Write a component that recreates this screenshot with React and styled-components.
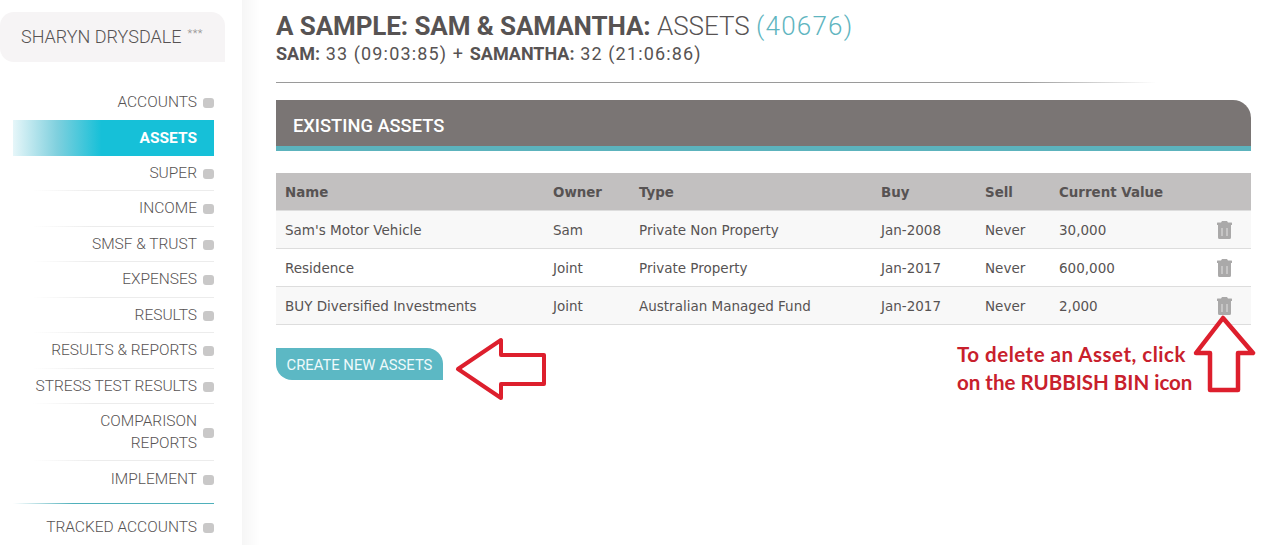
import React from 'react';
import styled, { createGlobalStyle } from 'styled-components';

const GlobalStyle = createGlobalStyle`
  html, body { margin: 0; padding: 0; background: #fff; }
  body { font-family: Roboto, "Liberation Sans", sans-serif; overflow: hidden; }
`;

const Page = styled.div`
  position: relative;
  display: flex;
  width: 1271px;
  height: 545px;
  overflow: hidden;
`;

const Sidebar = styled.aside`
  width: 242px;
  flex: none;
  padding-top: 12px;
  box-sizing: border-box;
`;

const UserBox = styled.div`
  width: 225px;
  height: 50px;
  box-sizing: border-box;
  padding: 0 0 2px 21px;
  display: flex;
  align-items: center;
  background: #f6f4f5;
  border-radius: 14px 14px 0 14px;
  font-size: 18px;
  font-weight: 300;
  color: #575353;
  white-space: nowrap;
`;

const Stars = styled.span`
  font-size: 11px;
  color: #8f8b8b;
  margin-left: 6px;
  margin-top: -5px;
  letter-spacing: 0.5px;
`;

const Nav = styled.nav`
  margin: 22px 28px 0 13px;
  display: flex;
  flex-direction: column;
`;

const NavItem = styled.div`
  display: flex;
  align-items: center;
  justify-content: flex-end;
  min-height: 35.5px;
  padding: 6px 0;
  box-sizing: border-box;
  text-align: right;
  font-size: 15.5px;
  font-weight: 300;
  line-height: 22px;
  color: #575353;
  border-bottom: ${p => (p.$line ? '1px solid #f0f0f0' : '0')};
  border-image: ${p => (p.$line ? 'linear-gradient(to right, #ffffff 10%, #ececec 40%, #ececec 100%) 1' : 'none')};
`;

const ActiveItem = styled(NavItem)`
  height: 36px;
  padding-right: 17px;
  background: linear-gradient(to right, #e6f6f9 0%, #7fd0de 22%, #16c0d8 44%, #16c0d8 100%);
  color: #fff;
  font-weight: 700;
`;

const Bullet = styled.span`
  flex: none;
  width: 11px;
  height: 10px;
  margin: 2px 0 0 6px;
  border-radius: 3px;
  background: #c9c8c8;
`;

const NavRule = styled.div`
  height: 1px;
  margin: 6px 0;
  background: linear-gradient(to right, #ffffff 0%, #4fb0bb 30%, #4fb0bb 100%);
`;

const Gutter = styled.div`
  width: 18px;
  flex: none;
  background: linear-gradient(to right, #f6f6f6, #ffffff);
`;

const Main = styled.main`
  width: 975px;
  margin-left: 16px;
  flex: none;
`;

const Title = styled.h1`
  margin: 11px 0 0;
  font-size: 26px;
  line-height: 30px;
  font-weight: 300;
  color: #575353;
  white-space: nowrap;

  strong { font-weight: 700; letter-spacing: -0.1px; }
`;

const Count = styled.span`
  color: #5fb5c0;
  letter-spacing: 1.2px;
`;

const SubTitle = styled.div`
  margin-top: 1px;
  font-size: 18px;
  line-height: 24px;
  font-weight: 400;
  letter-spacing: 1.15px;
  color: #575353;
  white-space: nowrap;

  strong { font-weight: 700; letter-spacing: 0; }
`;

const Rule = styled.div`
  height: 1px;
  margin-top: 16px;
  width: 880px;
  background: linear-gradient(to right, #9a9a9a 0%, #9a9a9a 85%, #ffffff 100%);
`;

const PanelHead = styled.div`
  margin-top: 17px;
  height: 41px;
  padding: 5px 0 0 17px;
  display: flex;
  align-items: center;
  background: #7a7574;
  border-bottom: 5px solid #5cb3bd;
  border-top-right-radius: 18px;
  color: #fff;
  font-size: 18.3px;
  font-weight: 500;
`;

const Table = styled.table`
  width: 975px;
  margin-top: 22px;
  border-collapse: collapse;
  table-layout: fixed;
  font-family: "DejaVu Sans", "Noto Sans", sans-serif;
  font-size: 13.5px;
  color: #575353;
`;

const Th = styled.th`
  height: 36px;
  padding: 1px 0 0 9px;
  background: #c2c0c0;
  text-align: left;
  font-weight: 700;
  font-size: 13.4px;
`;

const Row = styled.tr`
  background: ${p => (p.$odd ? '#f8f8f8' : '#ffffff')};
  border-top: 1px solid #dddddd;
  border-bottom: 1px solid #dddddd;
`;

const Td = styled.td`
  height: 37px;
  padding: 0 0 0 9px;
`;

const BinCell = styled(Td)`
  padding: 0 0 0 17px;
  text-align: center;
  line-height: 0;
`;

const CreateButton = styled.button`
  display: block;
  margin-top: 23px;
  width: 167px;
  height: 32px;
  padding: 2px 0 0;
  border: 0;
  background: #5cb8c4;
  color: #eefafb;
  border-radius: 0 16px 0 16px;
  font-family: Roboto, sans-serif;
  font-size: 14.8px;
  font-weight: 400;
`;

const Note = styled.div`
  position: absolute;
  left: 957px;
  top: 340px;
  font-family: Lato, "Open Sans", sans-serif;
  font-size: 20.5px;
  line-height: 28px;
  font-weight: 700;
  color: #c8202c;
  white-space: nowrap;
`;

const NoteLine = styled.span`
  letter-spacing: ${p => p.$spread}px;
`;

const ArrowOverlay = styled.svg`
  position: absolute;
  left: ${p => p.$x}px;
  top: ${p => p.$y}px;
`;

const Bin = () => (
  <svg width="15" height="18" viewBox="0 0 15 18" aria-hidden="true">
    <path fill="#aaa9a9" d="M5 0h5l1 1.5h3.5a.5.5 0 0 1 .5.5V4h-1v12.5a1.5 1.5 0 0 1-1.5 1.5h-10A1.5 1.5 0 0 1 1 16.5V4H0V2a.5.5 0 0 1 .5-.5H4z" />
    <path fill="#c6c5c5" d="M4 7h2v8H4zM9 7h2v8H9z" />
  </svg>
);

const navTop = ['ACCOUNTS'];
const navRest = ['SUPER', 'INCOME', 'SMSF & TRUST', 'EXPENSES', 'RESULTS', 'RESULTS & REPORTS', 'STRESS TEST RESULTS'];

const rows = [
  ["Sam's Motor Vehicle", 'Sam', 'Private Non Property', 'Jan-2008', 'Never', '30,000'],
  ['Residence', 'Joint', 'Private Property', 'Jan-2017', 'Never', '600,000'],
  ['BUY Diversified Investments', 'Joint', 'Australian Managed Fund', 'Jan-2017', 'Never', '2,000'],
];

export default function App() {
  return (
    <Page>
      <GlobalStyle />
      <Sidebar>
        <UserBox>SHARYN DRYSDALE<Stars>***</Stars></UserBox>
        <Nav>
          {navTop.map(n => <NavItem key={n}>{n}<Bullet /></NavItem>)}
          <ActiveItem>ASSETS</ActiveItem>
          {navRest.map(n => <NavItem key={n} $line>{n}<Bullet /></NavItem>)}
          <NavItem $line><span>COMPARISON<br />REPORTS</span><Bullet /></NavItem>
          <NavItem>IMPLEMENT<Bullet /></NavItem>
          <NavRule />
          <NavItem>TRACKED ACCOUNTS<Bullet /></NavItem>
        </Nav>
      </Sidebar>
      <Gutter />
      <Main>
        <Title><strong>A SAMPLE: SAM &amp; SAMANTHA:</strong> ASSETS <Count>(40676)</Count></Title>
        <SubTitle><strong>SAM:</strong> 33 (09:03:85) + <strong>SAMANTHA:</strong> 32 (21:06:86)</SubTitle>
        <Rule />
        <PanelHead>EXISTING ASSETS</PanelHead>
        <Table>
          <colgroup>
            <col width="268" /><col width="86" /><col width="242" /><col width="104" /><col width="74" /><col width="130" /><col width="71" />
          </colgroup>
          <thead>
            <tr><Th>Name</Th><Th>Owner</Th><Th>Type</Th><Th>Buy</Th><Th>Sell</Th><Th>Current Value</Th><Th /></tr>
          </thead>
          <tbody>
            {rows.map((r, i) => (
              <Row key={r[0]} $odd={i % 2 === 0}>
                {r.map((c, j) => <Td key={j}>{c}</Td>)}
                <BinCell><Bin /></BinCell>
              </Row>
            ))}
          </tbody>
        </Table>
        <CreateButton>CREATE NEW ASSETS</CreateButton>
      </Main>
      <ArrowOverlay $x={455} $y={337} width="93" height="64" viewBox="0 0 93 64">
        <path d="M3 32 L46 3 V18 H89 V47 H46 V61 Z" fill="#fff" stroke="#dd1f2d" strokeWidth="4" strokeLinejoin="round" />
      </ArrowOverlay>
      <Note><NoteLine $spread={0.5}>To delete an Asset, click</NoteLine><br />on the RUBBISH BIN icon</Note>
      <ArrowOverlay $x={1193} $y={315} width="64" height="80" viewBox="0 0 64 80">
        <path d="M30 3 L60 38 H45 V75 H17 V38 H3 Z" fill="#fff" stroke="#dd1f2d" strokeWidth="4.5" strokeLinejoin="round" />
      </ArrowOverlay>
    </Page>
  );
}
